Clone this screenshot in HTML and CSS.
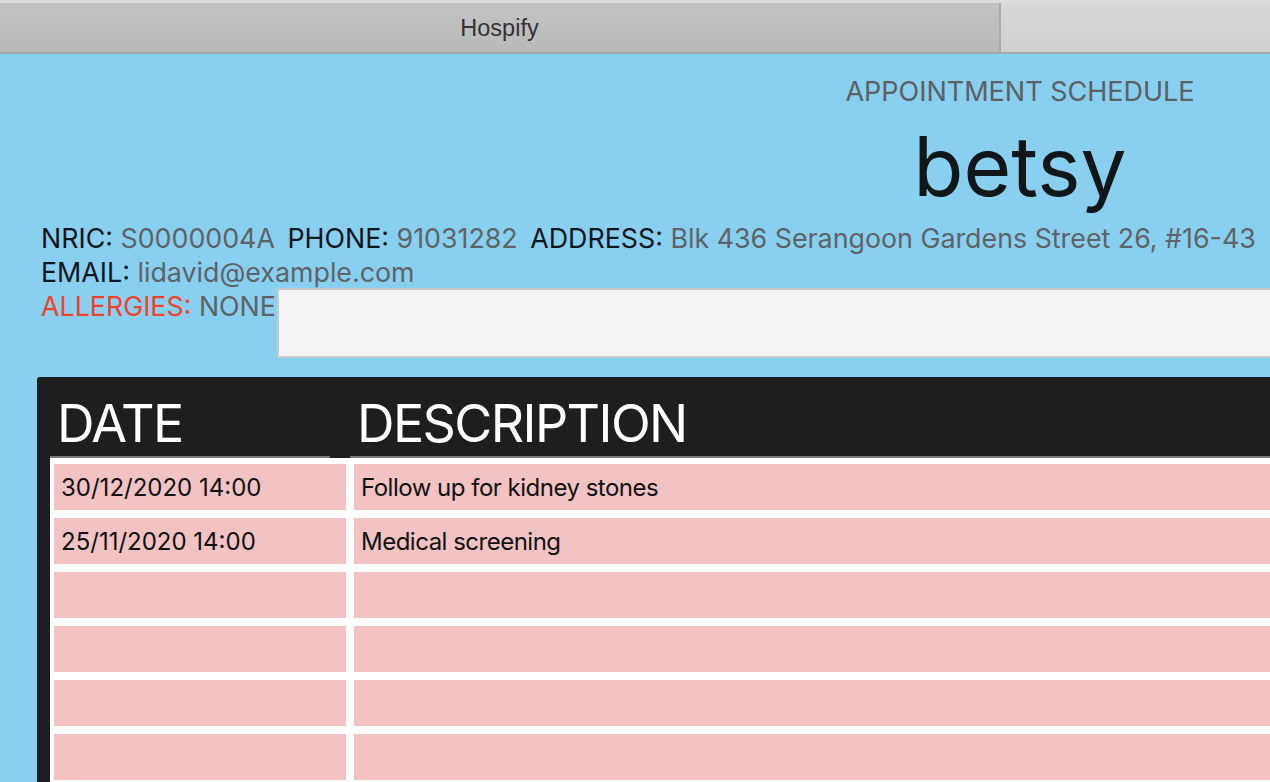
FILE: index.html
```html
<!DOCTYPE html>
<html lang="en">
<head>
<meta charset="utf-8">
<title>Hospify</title>
<link rel="stylesheet" href="styles.css">
</head>
<body>
<div class="app">
  <div class="titlebar">
    <div class="tab tab-active">Hospify</div>
    <div class="tab tab-inactive"></div>
  </div>
  <div class="content">
    <div class="header">
      <div class="header-box">
        <div class="schedule-title">APPOINTMENT SCHEDULE</div>
        <div class="patient-name">betsy</div>
      </div>
    </div>
    <div class="info">
      <div class="info-line">
        <span class="label">NRIC:</span> <span class="value">S0000004A</span>
        <span class="label sep">PHONE:</span> <span class="value">91031282</span>
        <span class="label sep">ADDRESS:</span> <span class="value">Blk 436 Serangoon Gardens Street 26, #16-43</span>
      </div>
      <div class="info-line">
        <span class="label">EMAIL:</span> <span class="value">lidavid@example.com</span>
      </div>
      <div class="allergy-row">
        <div class="info-line"><span class="label allergy">ALLERGIES:</span> <span class="value">NONE</span></div>
        <div class="textfield"></div>
      </div>
    </div>
    <div class="panel">
      <div class="table-head">
        <div class="head-cell head-date">DATE</div>
        <div class="head-cell head-desc">DESCRIPTION</div>
      </div>
      <div class="table-body">
        <div class="cell">30/12/2020 14:00</div>
        <div class="cell desc">Follow up for kidney stones</div>
        <div class="cell">25/11/2020 14:00</div>
        <div class="cell desc">Medical screening</div>
        <div class="cell"></div><div class="cell"></div>
        <div class="cell"></div><div class="cell"></div>
        <div class="cell"></div><div class="cell"></div>
        <div class="cell"></div><div class="cell"></div>
        <div class="cell"></div><div class="cell"></div>
      </div>
    </div>
  </div>
</div>
</body>
</html>
```

FILE: styles.css
```css
* { box-sizing: border-box; }
html, body { margin: 0; padding: 0; }
body {
  width: 1270px;
  height: 782px;
  overflow: hidden;
  font-family: Inter, "Noto Sans", sans-serif;
}
.app {
  display: flex;
  flex-direction: column;
  height: 782px;
}
.titlebar {
  display: flex;
  height: 54px;
  border-top: 3px solid #dcdcdc;
  border-bottom: 2px solid #a6a6a6;
  flex: 0 0 auto;
}
.tab {
  display: flex;
  align-items: center;
  justify-content: center;
  font-family: "Liberation Sans", Arial, sans-serif;
  font-size: 23.5px;
  color: #333;
}
.tab-active {
  flex: 0 0 999px;
  background: linear-gradient(#c3c3c3, #b9b9b9);
  padding-top: 1px;
}
.tab-inactive {
  flex: 1;
  border-left: 2px solid #acacac;
  background: linear-gradient(#d8d8d8, #d0d0d0);
}
.content {
  flex: 1;
  background: #89cff0;
  display: flex;
  flex-direction: column;
  overflow: hidden;
  min-height: 0;
}
.header {
  display: flex;
  justify-content: flex-end;
  padding-top: 22px;
}
.header-box {
  width: 500px;
  text-align: center;
}
.schedule-title {
  font-size: 27px;
  line-height: 32px;
  color: #5b6063;
}
.patient-name {
  margin-top: 14px;
  font-size: 82px;
  line-height: 90px;
  color: #111619;
}
.info {
  padding-left: 41px;
  margin-top: 9px;
}
.info-line {
  font-size: 26.8px;
  line-height: 34px;
  white-space: nowrap;
}
.label { color: #0e171c; }
.value { color: #5e6366; }
.sep { margin-left: 5px; }
.allergy { color: #f0432b; }
.allergy-row {
  display: flex;
  align-items: flex-start;
}
.textfield {
  flex: 1;
  margin-left: 1px;
  margin-top: -1px;
  height: 70px;
  background: #f4f4f4;
  border: 2px solid #c9c9c9;
  border-right: none;
}
.panel {
  flex: 1;
  margin-top: 19px;
  margin-left: 37px;
  background: #1e1e1e;
  border-radius: 3px 0 0 0;
  padding-left: 13px;
  display: flex;
  flex-direction: column;
  min-height: 0;
}
.table-head {
  display: flex;
  gap: 20px;
}
.head-cell {
  padding: 18px 0 3px 7px;
  font-size: 52px;
  line-height: 58px;
  letter-spacing: -1.6px;
  color: #ffffff;
  border-bottom: 2px solid #7a7a7a;
}
.head-date { flex: 0 0 280px; }
.head-desc { flex: 1; }
.table-body {
  flex: 1;
  background: #ffffff;
  padding: 6px 0 0 4px;
  display: grid;
  grid-template-columns: 292px 1fr;
  grid-auto-rows: 46px;
  gap: 8px;
  overflow: hidden;
  min-height: 0;
}
.cell {
  background: #f3c2c3;
  display: flex;
  align-items: center;
  padding-left: 7px;
  font-size: 24px;
  color: #111;
  white-space: nowrap;
}
.desc { letter-spacing: -0.5px; }
```
